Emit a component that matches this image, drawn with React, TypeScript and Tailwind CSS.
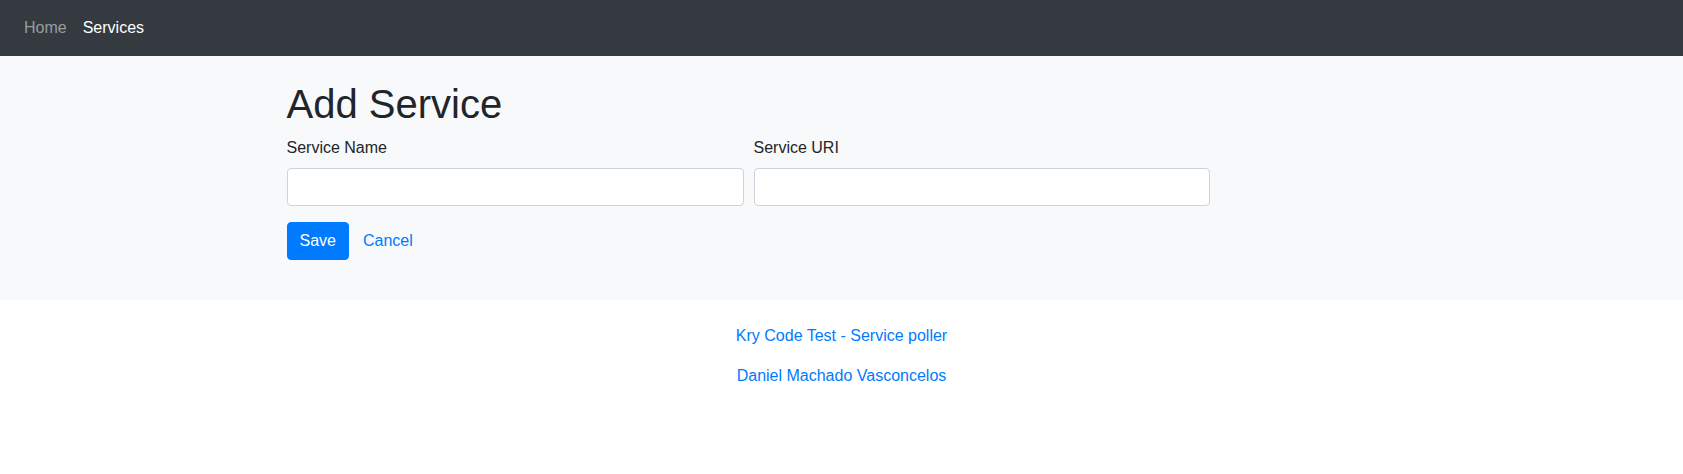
import { useState } from "react";

const App = () => {
  const [name, setName] = useState("");
  const [uri, setUri] = useState("");

  return (
    <div className="min-h-screen bg-white text-[#212529] font-['Liberation_Sans',Arial,sans-serif] text-base leading-6">
      <nav className="bg-[#343a40] h-14 flex items-center px-4">
        <a href="#" className="px-2 py-2 text-white/50">Home</a>
        <a href="#" className="px-2 py-2 text-white">Services</a>
      </nav>

      <section className="bg-[#f8f9fa] pt-6 pb-10">
        <div className="w-[1110px] mx-auto">
          <h1 className="text-[40px] leading-[48px] font-medium mb-2">Add Service</h1>
          <form className="w-[923px]" onSubmit={(e) => e.preventDefault()}>
            <div className="grid grid-cols-[457px_456px] gap-[10px] mb-4">
              <div>
                <label className="block mb-2">Service Name</label>
                <input
                  value={name}
                  onChange={(e) => setName(e.target.value)}
                  className="block w-full h-[38px] px-3 bg-white border border-[#ced4da] rounded outline-none"
                />
              </div>
              <div>
                <label className="block mb-2">Service URI</label>
                <input
                  value={uri}
                  onChange={(e) => setUri(e.target.value)}
                  className="block w-full h-[38px] px-3 bg-white border border-[#ced4da] rounded outline-none"
                />
              </div>
            </div>
            <div className="flex items-center gap-[2px]">
              <button type="submit" className="h-[38px] px-3 bg-[#007bff] text-white rounded border border-[#007bff]">
                Save
              </button>
              <a href="#" className="px-3 py-[7px] text-[#007bff]">Cancel</a>
            </div>
          </form>
        </div>
      </section>

      <footer className="pt-6 text-center">
        <p className="mb-4"><a href="#" className="text-[#007bff]">Kry Code Test - Service poller</a></p>
        <p className="mb-4"><a href="#" className="text-[#007bff]">Daniel Machado Vasconcelos</a></p>
      </footer>
    </div>
  );
};

export default App;
